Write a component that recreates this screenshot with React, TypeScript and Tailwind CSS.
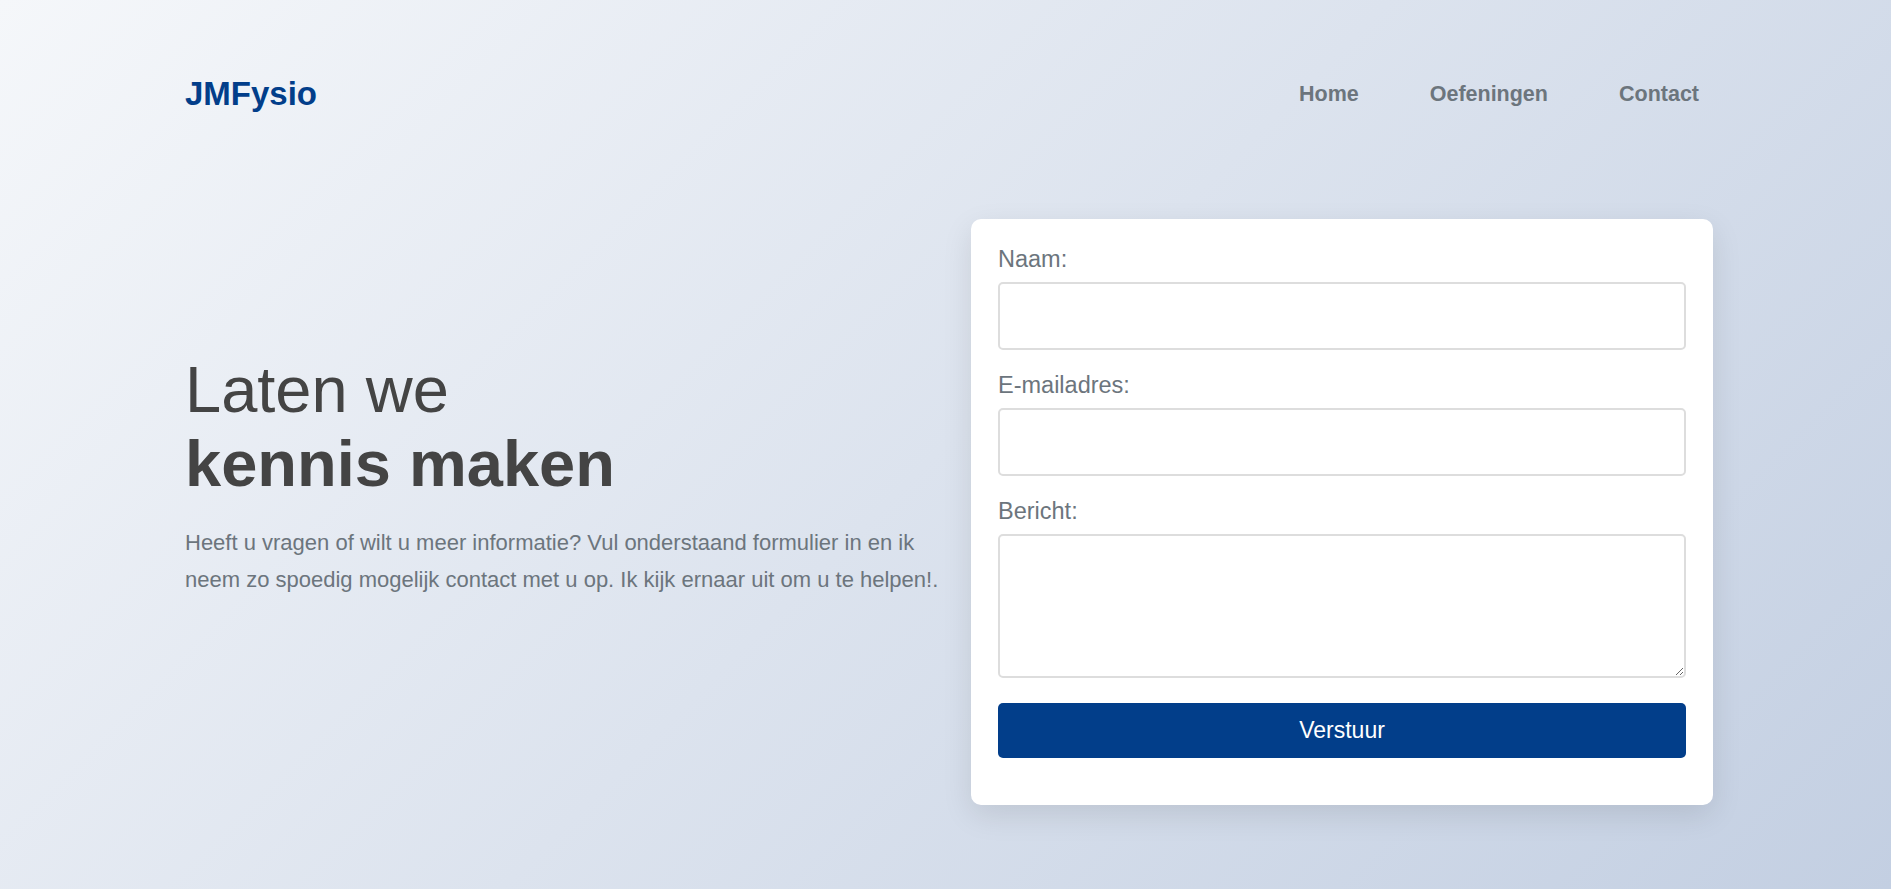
export default function App() {
  return (
    <div
      className="min-h-screen w-full bg-[linear-gradient(135deg,#f5f7fa_0%,#c3cfe2_100%)] pt-[75px] pl-[185px] pr-[178px]"
      style={{ fontFamily: '"Liberation Sans", Arial, sans-serif' }}
    >
      {/* Header */}
      <header className="flex h-[38px] w-[1528px] items-center justify-between">
        <a className="text-[33px] font-bold leading-[38px] text-[#023e8a]">JMFysio</a>
        <nav className="flex gap-[71px] pr-[14px]">
          {["Home", "Oefeningen", "Contact"].map((item) => (
            <a key={item} className="text-[21.5px] font-bold leading-[26px] text-[#6c757d]">
              {item}
            </a>
          ))}
        </nav>
      </header>

      {/* Hero */}
      <main className="mt-[106px] flex w-[1528px] items-start justify-between">
        <div className="mt-[134px] w-[770px]">
          <h1 className="text-[65px] leading-[74px] text-[#444444]">
            Laten we
            <br />
            <strong className="font-bold">kennis maken</strong>
          </h1>
          <p className="mt-[23px] text-[22px] leading-[1.7] text-[#6c757d]">
            Heeft u vragen of wilt u meer informatie? Vul onderstaand formulier in en ik neem zo
            spoedig mogelijk contact met u op. Ik kijk ernaar uit om u te helpen!.
          </p>
        </div>

        <form className="w-[742px] rounded-[10px] bg-white px-[27px] pt-[27px] pb-[47px] shadow-[0_10px_30px_rgba(0,0,0,0.1)]">
          <label className="mb-[9px] block text-[23.5px] leading-[27px] text-[#6c757d]">Naam:</label>
          <input
            type="text"
            className="mb-[22px] block h-[68px] w-full rounded-[5px] border-2 border-[#dddddd] bg-white"
          />
          <label className="mb-[9px] block text-[23.5px] leading-[27px] text-[#6c757d]">
            E-mailadres:
          </label>
          <input
            type="email"
            className="mb-[22px] block h-[68px] w-full rounded-[5px] border-2 border-[#dddddd] bg-white"
          />
          <label className="mb-[9px] block text-[23.5px] leading-[27px] text-[#6c757d]">Bericht:</label>
          <textarea className="block h-[144px] w-full rounded-[5px] border-2 border-[#dddddd] bg-white" />
          <button
            type="button"
            className="mt-[25px] block h-[55px] w-full rounded-[5px] bg-[#023e8a] text-[23px] text-white"
          >
            Verstuur
          </button>
        </form>
      </main>
    </div>
  );
}
